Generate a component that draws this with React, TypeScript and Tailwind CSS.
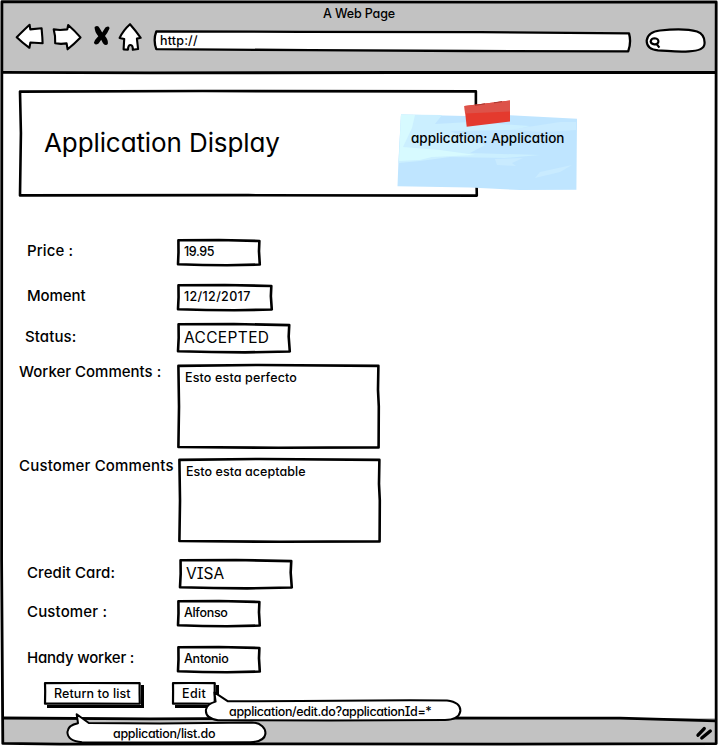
import type { ReactNode } from "react";

const fieldShape = "M.5 1 L50 0 L99.5 4 L99 45 L100 99 L60 102 L30 101 L0 98 L.6 50 Z";
const areaShape = "M.2 1 L40 0 L99.8 1 L99.6 30 L100 50 L99.9 99.5 L50 100 L.2 99 L.5 50 Z";
const panelShape = "M0 .6 L40 0 L99.8 .4 L99.8 50 L100 99.8 L50 99.4 L0 99.6 L.2 40 Z";

function Outline({ shape, thin }: { shape: string; thin?: boolean }) {
  return (
    <svg className="absolute inset-[1.3px] h-[calc(100%-2.2px)] w-[calc(100%-2.2px)] overflow-visible" viewBox="0 0 100 100" preserveAspectRatio="none">
      <path d={shape} fill="#fff" stroke="#000" strokeWidth={thin ? 2.2 : 2.6} strokeLinejoin="round" vectorEffect="non-scaling-stroke" />
    </svg>
  );
}

function Row({ className, label, labelClass, children }: { className: string; label: string; labelClass: string; children: ReactNode }) {
  return (
    <div className={"flex items-start " + className}>
      <div className="w-[177px] shrink-0">
        <div className={"whitespace-pre text-[15px] leading-5 " + labelClass}>{label}</div>
      </div>
      {children}
    </div>
  );
}

function Field({ className, shape = fieldShape, children }: { className: string; shape?: string; children: string }) {
  return (
    <div className={"relative h-full whitespace-pre leading-5 " + className}>
      <Outline shape={shape} />
      <span className="relative">{children}</span>
    </div>
  );
}

function Button({ className, children }: { className: string; children: string }) {
  return (
    <div className={"relative h-[23px] text-[12.5px] leading-5 shadow-[3px_3px_0_#000] " + className}>
      <Outline shape={panelShape} thin />
      <span className="relative">{children}</span>
    </div>
  );
}

function Toolbar() {
  return (
    <div className="flex items-start pl-[14px]">
      <svg className="h-[30px] w-[32px]" viewBox="14 22 32 30" fill="#fff" stroke="#000" strokeWidth="2.1" strokeLinejoin="round">
        <path d="M16.7 37.3 C21 33 26 28 29.6 24.8 L30.3 29.4 L41.6 28.3 L42.3 37 L42.6 43.2 L30.4 42.5 L29.4 47.8 Q22 42.5 16.7 37.3Z" />
      </svg>
      <svg className="ml-[5px] h-[30px] w-[32px]" viewBox="51 22 32 30" fill="#fff" stroke="#000" strokeWidth="2.1" strokeLinejoin="round">
        <path d="M53.7 29.4 L60 30 L67.3 29.4 L68.2 25 Q75 31 80.5 37.4 Q74 44 67.6 49.3 L66.6 43.4 L61 43.9 L55.2 43.2 L55 36Z" />
      </svg>
      <svg className="ml-[8px] mt-[2px] h-[26px] w-[22px]" viewBox="91 24 22 26" fill="#000">
        <path d="M94.6 27 Q98 24.8 99.5 28 L102.2 32.5 L105.4 27.5 Q109.5 25.2 109.5 28.5 Q107.5 33 105 36 Q108.5 40 107.8 44 Q105.8 46.5 103 43.2 L101.2 39.7 L98.6 43.5 Q95 45.8 93.9 42.8 Q94.8 39.5 98.3 36.2 Q94.4 31.5 94.6 27Z" />
      </svg>
      <svg className="ml-[4px] h-[30px] w-[26px]" viewBox="117 22 26 30" fill="#fff" stroke="#000" strokeWidth="2.1" strokeLinejoin="round">
        <path d="M130 24.2 Q136 31 140.7 37.8 L136.9 38.6 L138.1 49 L132.8 49.8 Q133 45 130.5 45 Q128 45 128 49.6 L123.6 49.4 L124.2 39 L119.6 38 Q123 30.5 130 24.2Z" />
      </svg>
      <div className="relative ml-[10px] mt-[7px] h-[24px] w-[480px]">
        <svg className="absolute inset-0" width="480" height="24" viewBox="153 29 480 24" fill="#fff" stroke="#000" strokeWidth="2.3" strokeLinejoin="round">
          <path d="M156.3 31.4 L300 31.8 L480 32.2 L629 33.4 Q631.5 42 628.2 51.4 L470 51 L310 50.1 L156.3 49.2 Q153 40 156.3 31.4Z" />
        </svg>
        <span className="relative top-[2px] block pl-[7px] text-[12.5px] leading-5 tracking-[.18px]">http://</span>
      </div>
      <svg className="ml-[11px] mt-[6px] h-[26px] w-[64px]" viewBox="644 28 64 26" fill="#fff" stroke="#000" strokeWidth="2.2">
        <path d="M658 50.4 C650 49.5 646.5 46 646.7 40.5 C647.5 34 653 31.4 660 30.5 C674 29 689 29.2 697 31.5 C702.5 33.5 705 38 704.5 44 C704 49.5 697 51 689 51.3 C678 52.3 668 50.8 658 50.4Z" />
        <path d="M650.6 41.5 Q651.2 38.2 654.8 38.2 Q658.6 38.6 658.4 41.8 Q657.5 44.5 654.3 44.4 Q651 44 650.6 41.5Z M656.6 44 L659.4 47.6" strokeWidth="2.1" />
      </svg>
    </div>
  );
}

function StickyNote() {
  return (
    <div className="absolute left-[396px] top-[98px] h-[94px] w-[184px]">
      <svg className="absolute inset-0" width="184" height="94" viewBox="396 98 184 94">
        <path d="M401 114.5 L465 116 L510 115.2 L577 118.7 L576.4 189.8 L520 190 L470 187.5 L397.5 186.3 L398.5 160Z" fill="#bfe5ff" />
        <path d="M401 114.5 L442 115 L435 124 L470 122 L530 126 L515 130 L450 131 L485 145 L470 153 L540 155 L505 158 L450 157 L420 161 L398.5 163Z" fill="#cbefff" />
        <path d="M401 114.5 L415 115 L412 128 L403 147 L440 150 L476 155 L432 157 L420 160 L399 161Z" fill="#dafdff" opacity=".8" />
        <path d="M495 159 L523 158 L512 163 L516 166 L497 165Z M540 172 L572 165 L560 172 L535 178Z M508 130 L560 122 L576 122 L576 130 L545 132Z" fill="#c9ebff" />
        <path d="M464.4 106 L510 100.4 L510 121.5 L466.7 126.8Z" fill="#e43a2e" />
        <path d="M464.4 106 L510 100.4 L510 111.4 L465 113.5Z" fill="#dd5249" />
        <path d="M475 105.4 L485 103.8 M494 102.8 L502 101.6" stroke="#a83830" strokeWidth="1" />
      </svg>
      <span className="relative left-[15px] top-[27px] whitespace-pre text-[13.5px] leading-5">application: Application</span>
    </div>
  );
}

function ListCallout() {
  return (
    <div className="absolute left-[64px] top-[712px] h-[34px] w-[204px]">
      <svg className="absolute inset-0" width="204" height="34" viewBox="64 712 204 34">
        <path d="M76.7 714.3 L88.8 723 L160 723.4 L252 722.4 C261 723 266 728 265.4 734 C264.5 740 258 742 250 742.2 L160 742.6 L82 742.2 C73 741.5 67.5 738 67.4 732 C67.8 727.5 71 724.5 78 723.2Z" fill="#fff" stroke="#000" strokeWidth="2" strokeLinejoin="round" />
      </svg>
      <span className="relative left-[49px] top-[8px] whitespace-pre text-[12.5px] leading-5 tracking-[-.3px]">application/list.do</span>
    </div>
  );
}

function EditCallout() {
  return (
    <div className="absolute left-[203px] top-[690px] h-[32px] w-[260px]">
      <svg className="absolute inset-0" width="260" height="32" viewBox="203 690 260 32">
        <path d="M214.4 692.4 L228 701.3 L300 701 L410 700.2 L447 700.4 C456 701.4 461 705.5 460.3 711.5 C459 717.5 454 719.8 445 720 L330 720.6 L218 720.2 C209 719 205.3 715 206 709.5 C207 705 210 703 215.6 701.6Z" fill="#fff" stroke="#000" strokeWidth="2" strokeLinejoin="round" />
      </svg>
      <span className="relative left-[26px] top-[8px] whitespace-pre text-[12.5px] leading-5 tracking-[-.35px] [font-feature-settings:'cv11','cv08']">application/edit.do?applicationId=*</span>
    </div>
  );
}

function WindowFrame() {
  return (
    <svg className="pointer-events-none absolute inset-0" width="718" height="746" viewBox="0 0 718 746" fill="none" stroke="#000" strokeWidth="2.8" strokeLinejoin="round">
      <path d="M1.9 1.7 L300 1.9 L500 2.1 L716.2 2 L715.8 300 L716.2 743.6 L500 744.2 L250 743.8 L60 744.2 L2.8 743.4 L1.6 560 L1.7 250Z" />
      <path d="M2 72.3 L150 72.9 L400 72.5 L716 72.5" />
      <path d="M2 718 L150 718.8 L400 718 L620 718.2 L716 720.8" />
    </svg>
  );
}

export default function App() {
  return (
    <div className="relative flex h-[746px] w-[718px] flex-col overflow-hidden bg-white font-medium text-black [font-family:Inter,'Open_Sans',sans-serif] [font-feature-settings:'cv11']">
      <header className="mx-[2px] mt-[2px] h-[71px] bg-[#c2c2c2]">
        <div className="h-[20px] pl-[321px] pt-[3px] text-[12.5px] leading-[18px] tracking-[-.12px]">A Web Page</div>
        <div className="-ml-[2px]">
          <Toolbar />
        </div>
      </header>
      <main className="h-[645px]">
        <div className="relative ml-[19px] mt-[17px] h-[107px] w-[459px] whitespace-pre">
          <Outline shape={panelShape} />
          <div className="relative pl-[25px] pt-[37px] text-[26px] font-normal leading-8 tracking-[-.1px]">Application Display</div>
        </div>
        <Row className="mt-[42px] h-[27px]" label="Price :" labelClass="pl-[27px] pt-[2px] tracking-[.1px]">
          <Field className="w-[84px] pl-[7px] pt-[3px] text-[12.5px] tracking-[-.4px]">19.95</Field>
        </Row>
        <Row className="mt-[18px] h-[27px]" label="Moment" labelClass="pl-[27px] pt-[2px] tracking-[-.1px]">
          <Field className="w-[96px] pl-[7px] pt-[3px] text-[12.5px] tracking-[.35px]">12/12/2017</Field>
        </Row>
        <Row className="mt-[12px] h-[30px]" label="Status:" labelClass="pl-[25px] pt-[4px] tracking-[.1px]">
          <Field className="w-[114px] pl-[7px] pt-[5px] text-[15.5px] font-normal tracking-[.35px]">ACCEPTED</Field>
        </Row>
        <Row className="mt-[11px] h-[85px]" label="Worker Comments :" labelClass="-mt-[2px] pl-[19px] tracking-[0px]">
          <Field shape={areaShape} className="w-[203px] pl-[8px] pt-[4px] text-[12.5px] tracking-[.15px]">Esto esta perfecto</Field>
        </Row>
        <Row className="mt-[9px] h-[85px]" label="Customer Comments" labelClass="-mt-[2px] pl-[19px] tracking-[.18px]">
          <Field shape={areaShape} className="ml-[1px] w-[203px] pl-[8px] pt-[4px] text-[12.5px] tracking-[.05px]">Esto esta aceptable</Field>
        </Row>
        <Row className="mt-[16px] h-[30px]" label="Credit Card:" labelClass="pl-[27px] pt-[4px] tracking-[.08px]">
          <Field className="ml-[2px] w-[114px] pl-[7px] pt-[5px] text-[15.5px] font-normal tracking-[0px] [font-feature-settings:'cv11','cv08']">VISA</Field>
        </Row>
        <Row className="mt-[11px] h-[27px]" label="Customer :" labelClass="pl-[27px] pt-[2px] tracking-[.15px]">
          <Field className="w-[84px] pl-[7px] pt-[3px] text-[12.5px] tracking-[-.32px]">Alfonso</Field>
        </Row>
        <Row className="mt-[19px] h-[27px]" label="Handy worker :" labelClass="pl-[27px] pt-[2px] tracking-[-.2px]">
          <Field className="w-[84px] pl-[7px] pt-[3px] text-[12.5px] tracking-[-.25px]">Antonio</Field>
        </Row>
        <div className="mt-[9px] flex whitespace-pre pl-[44px]">
          <Button className="w-[97px] pl-[10px] pt-[2px] tracking-[.1px]">Return to list</Button>
          <Button className="ml-[31px] w-[44px] pl-[10px] pt-[2px] tracking-[.4px]">Edit</Button>
        </div>
      </main>
      <footer className="mx-[2px] flex h-[25px] justify-end bg-[#c2c2c2] pr-[2px]">
        <svg className="mt-[6px] h-[18px] w-[20px]" viewBox="694 724 20 18" stroke="#000" strokeWidth="3.4" strokeLinecap="round">
          <path d="M698 735.2 L704.2 728.6 M701.8 738 L710.3 731" />
        </svg>
      </footer>
      <WindowFrame />
      <StickyNote />
      <EditCallout />
      <ListCallout />
    </div>
  );
}
